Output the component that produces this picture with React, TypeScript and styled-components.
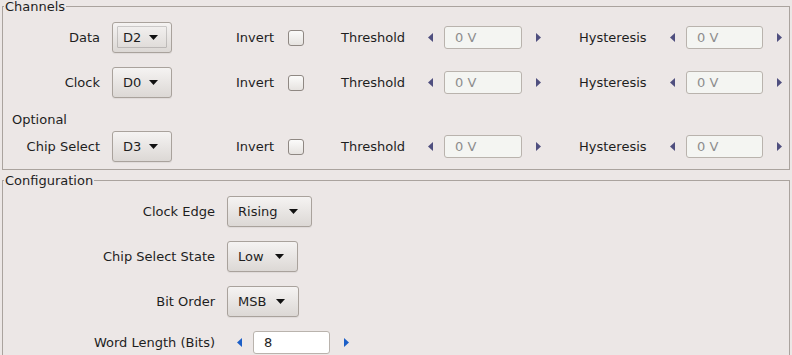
import React from 'react';
import styled, { createGlobalStyle } from 'styled-components';

const colors = {
  window: '#ece7e6',
  text: '#1e1e1e',
  frame: '#aaa39e',
  buttonTop: '#f5f3f2',
  buttonBottom: '#dcd8d5',
  buttonBorder: '#a9a29c',
  fieldBorder: '#b9b3ad',
  disabledField: '#f4f5f2',
  disabledText: '#8d8d8d',
  arrowEnabled: '#1c5fc7',
  arrowDisabled: '#34346c',
};

const GlobalStyle = createGlobalStyle`
  html, body {
    margin: 0;
    background: ${colors.window};
  }
  body {
    font-family: 'DejaVu Sans', 'Liberation Sans', sans-serif;
    font-size: 13px;
    color: ${colors.text};
    overflow: hidden;
  }
  #root {
    padding: 0 2px;
  }
`;

const Group = styled.fieldset`
  margin: 0 0 4px;
  padding: 9px 0 7px;
  border: 1px solid ${colors.frame};
  min-width: 0;
`;

const Title = styled.legend`
  margin-left: 1px;
  padding: 0 1px;
  line-height: 13px;
`;

const Stack = styled.div<{ $gap: number }>`
  display: flex;
  flex-direction: column;
  gap: ${(p) => p.$gap}px;
`;

const ChannelRow = styled.div`
  display: grid;
  grid-template-columns: 109px 124px 52px 53px 87px 151px 91px 1fr;
  align-items: center;
  height: 31px;
`;

const ConfigRow = styled.div<{ $h: number }>`
  display: grid;
  grid-template-columns: 224px 1fr;
  align-items: center;
  height: ${(p) => p.$h}px;
`;

const Label = styled.span<{ $right?: boolean }>`
  line-height: 15px;
  white-space: nowrap;
  text-align: ${(p) => (p.$right ? 'right' : 'left')};
  padding-right: ${(p) => (p.$right ? '12px' : '0')};
`;

const Note = styled.div`
  line-height: 15px;
  padding-left: 9px;
`;

const Combo = styled.div<{ $w: number; $focus?: boolean }>`
  position: relative;
  box-sizing: border-box;
  width: ${(p) => p.$w}px;
  height: 31px;
  display: flex;
  align-items: center;
  justify-content: space-between;
  padding: 0 13px 0 10px;
  border: 1px solid ${colors.buttonBorder};
  border-radius: 3px;
  background: linear-gradient(${colors.buttonTop}, ${colors.buttonBottom});
  box-shadow: 0 1px 1px rgba(0, 0, 0, 0.06);

  &::after {
    content: '';
    display: ${(p) => (p.$focus ? 'block' : 'none')};
    position: absolute;
    inset: 3px 4px 4px 4px;
    border: 1px solid rgba(0, 0, 0, 0.16);
    border-radius: 1px;
  }
`;

const Check = styled.span`
  box-sizing: border-box;
  width: 16px;
  height: 16px;
  border: 1px solid #8f8883;
  border-radius: 3px;
  background: linear-gradient(#fbfbfa, #e6e3e0);
`;

const Spin = styled.div<{ $indent?: number }>`
  display: flex;
  align-items: center;
  margin-left: ${(p) => p.$indent ?? 0}px;
`;

const ArrowBox = styled.span<{ $after?: boolean }>`
  display: flex;
  align-items: center;
  width: ${(p) => (p.$after ? 'auto' : '16px')};
  margin-left: ${(p) => (p.$after ? '14px' : '0')};
`;

const Field = styled.div<{ $w: number; $disabled?: boolean }>`
  box-sizing: border-box;
  width: ${(p) => p.$w}px;
  height: 23px;
  line-height: 21px;
  padding-left: 10px;
  border: 1px solid ${colors.fieldBorder};
  border-radius: 3px;
  background: ${(p) => (p.$disabled ? colors.disabledField : '#ffffff')};
  color: ${(p) => (p.$disabled ? colors.disabledText : colors.text)};
`;

function DropArrow() {
  return (
    <svg width="9" height="5" viewBox="0 0 9 5">
      <polygon points="0,0 9,0 4.5,5" fill="#111" />
    </svg>
  );
}

function StepArrow({ dir, disabled }: { dir: 'left' | 'right'; disabled?: boolean }) {
  const pts = dir === 'left' ? '5,0 5,9 0,4.5' : '0,0 0,9 5,4.5';
  return (
    <svg width="5" height="9" viewBox="0 0 5 9">
      <polygon
        points={pts}
        fill={disabled ? colors.arrowDisabled : colors.arrowEnabled}
        opacity={disabled ? 0.85 : 1}
      />
    </svg>
  );
}

function SpinBox({
  value,
  width,
  disabled,
  indent,
}: {
  value: string;
  width: number;
  disabled?: boolean;
  indent?: number;
}) {
  return (
    <Spin $indent={indent}>
      <ArrowBox>
        <StepArrow dir="left" disabled={disabled} />
      </ArrowBox>
      <Field $w={width} $disabled={disabled}>
        {value}
      </Field>
      <ArrowBox $after>
        <StepArrow dir="right" disabled={disabled} />
      </ArrowBox>
    </Spin>
  );
}

function Channel({ name, pin, focus }: { name: string; pin: string; focus?: boolean }) {
  return (
    <ChannelRow>
      <Label $right>{name}</Label>
      <Combo $w={60} $focus={focus}>
        <span>{pin}</span>
        <DropArrow />
      </Combo>
      <Label>Invert</Label>
      <Check />
      <Label>Threshold</Label>
      <SpinBox value="0 V" width={78} disabled />
      <Label>Hysteresis</Label>
      <SpinBox value="0 V" width={77} disabled />
    </ChannelRow>
  );
}

function ConfigCombo({ label, value, width }: { label: string; value: string; width: number }) {
  return (
    <ConfigRow $h={31}>
      <Label $right>{label}</Label>
      <Combo $w={width}>
        <span>{value}</span>
        <DropArrow />
      </Combo>
    </ConfigRow>
  );
}

export default function App(): JSX.Element {
  return (
    <>
      <GlobalStyle />
      <Group>
        <Title>Channels</Title>
        <Stack $gap={14}>
          <Channel name="Data" pin="D2" focus />
          <Channel name="Clock" pin="D0" />
          <Stack $gap={4}>
            <Note>Optional</Note>
            <Channel name="Chip Select" pin="D3" />
          </Stack>
        </Stack>
      </Group>
      <Group>
        <Title>Configuration</Title>
        <Stack $gap={14}>
          <ConfigCombo label="Clock Edge" value="Rising" width={85} />
          <ConfigCombo label="Chip Select State" value="Low" width={71} />
          <ConfigCombo label="Bit Order" value="MSB" width={72} />
          <ConfigRow $h={23}>
            <Label $right>Word Length (Bits)</Label>
            <SpinBox value="8" width={77} indent={10} />
          </ConfigRow>
        </Stack>
      </Group>
    </>
  );
}
